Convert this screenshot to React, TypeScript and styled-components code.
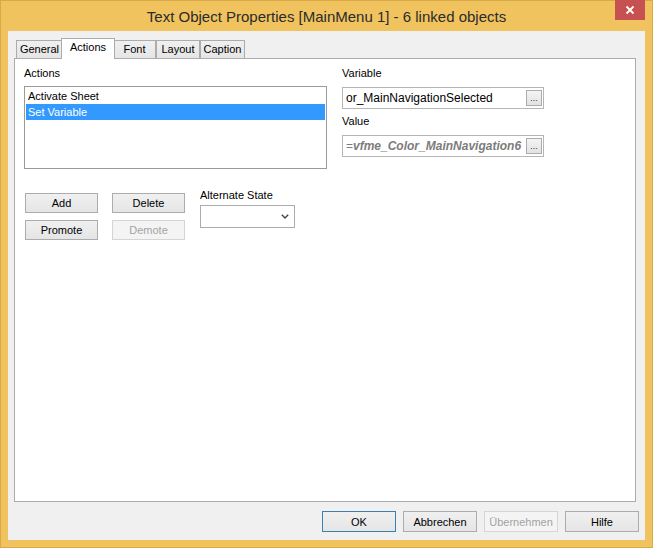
import React from 'react'
import styled, { createGlobalStyle, css } from 'styled-components'

const GlobalStyle = createGlobalStyle`
  html, body {
    margin: 0;
    padding: 0;
  }
  body {
    width: 653px;
    height: 548px;
    overflow: hidden;
    font-family: "Liberation Sans", Arial, sans-serif;
  }
`

const Window = styled.div`
  width: 653px;
  height: 548px;
  box-sizing: border-box;
  border: 1px solid #d9ab48;
  background: #f0c35f;
  display: flex;
  flex-direction: column;
`

const TitleBar = styled.div`
  height: 30px;
  flex-shrink: 0;
  display: grid;
  grid-template-columns: 1fr auto 1fr;
  align-items: center;
  padding: 0 7px;
`

const Title = styled.div`
  grid-column: 2;
  font-size: 15px;
  color: #2b2b2b;
  white-space: nowrap;
`

const CloseButton = styled.div`
  grid-column: 3;
  justify-self: end;
  align-self: start;
  margin-top: -1px;
  width: 30px;
  height: 20px;
  background: #c75050;
  display: flex;
  align-items: center;
  justify-content: center;
`

const Client = styled.div`
  flex: 1;
  margin: 0 7px 7px;
  background: #f0f0f0;
  display: flex;
  flex-direction: column;
  padding: 7px 6px 8px 6px;
`

const TabRow = styled.div`
  height: 21px;
  display: flex;
  align-items: flex-end;
  padding-left: 2px;
  margin: 0 3px -1px 0;
`

const Tab = styled.div<{ $active?: boolean; $w: number }>`
  box-sizing: border-box;
  width: ${(p) => p.$w}px;
  height: 18px;
  margin-bottom: 1px;
  border: 1px solid #acacac;
  border-bottom: none;
  background: linear-gradient(#f0f0f0, #e5e5e5);
  font-size: 11px;
  line-height: 13px;
  padding-top: 2px;
  text-align: center;
  color: #000;
  ${(p) =>
    p.$active &&
    css`
      position: relative;
      z-index: 1;
      height: 21px;
      margin: 0 -2px;
      background: #fff;
    `}
`

const Panel = styled.div`
  flex: 1;
  margin-right: 3px;
  background: #fff;
  border: 1px solid #acacac;
  padding: 8px 9px;
`

const TopGrid = styled.div`
  display: grid;
  grid-template-columns: 303px 202px;
  column-gap: 15px;
`

const Column = styled.div`
  display: flex;
  flex-direction: column;
`

const Label = styled.div`
  font-size: 11px;
  line-height: 13px;
  color: #000;
  margin-bottom: 6px;
`

const ListBox = styled.div`
  box-sizing: border-box;
  height: 83px;
  border: 1px solid #9a9a9a;
  padding: 1px;
`

const ListItem = styled.div<{ $selected?: boolean }>`
  height: 16px;
  line-height: 16px;
  padding-left: 2px;
  font-size: 11px;
  color: ${(p) => (p.$selected ? '#fff' : '#000')};
  background: ${(p) => (p.$selected ? '#3399ff' : 'transparent')};
`

const Field = styled.div`
  box-sizing: border-box;
  height: 22px;
  margin: 1px 0 6px;
  border: 1px solid #b5b5b5;
  background: #fff;
  display: flex;
  align-items: center;
  justify-content: space-between;
  padding: 0 1px 0 3px;
  font-size: 12px;
  color: #000;
  white-space: nowrap;
  overflow: hidden;
`

const ValueText = styled.span`
  color: #7c7c7c;

  & b {
    font-style: italic;
  }
`

const EllipsisButton = styled.div`
  box-sizing: border-box;
  flex-shrink: 0;
  width: 16px;
  height: 16px;
  border: 1px solid #acacac;
  background: linear-gradient(#f4f4f4, #e2e2e2);
  display: flex;
  align-items: flex-end;
  justify-content: center;
  font-size: 9px;
  line-height: 9px;
  padding-bottom: 2px;
  color: #333;
`

const BottomSection = styled.div`
  display: flex;
  margin-top: 20px;
`

const ButtonGrid = styled.div`
  display: grid;
  grid-template-columns: 73px 73px;
  grid-auto-rows: 20px;
  column-gap: 14px;
  row-gap: 7px;
  padding: 4px 0 0 1px;
`

const Button = styled.div<{ $w?: number; $default?: boolean; $disabled?: boolean }>`
  box-sizing: border-box;
  width: ${(p) => (p.$w ? `${p.$w}px` : 'auto')};
  height: 100%;
  border: 1px solid ${(p) => (p.$default ? '#3c7fb1' : '#acacac')};
  background: linear-gradient(#f0f0f0, #e5e5e5);
  display: flex;
  align-items: center;
  justify-content: center;
  font-size: 11px;
  color: #000;
  ${(p) =>
    p.$disabled &&
    css`
      border-color: #d5d5d5;
      background: #f4f4f4;
      color: #a3a3a3;
    `}
`

const StateBlock = styled.div`
  margin-left: 15px;
  display: flex;
  flex-direction: column;
`

const Combo = styled.div`
  box-sizing: border-box;
  width: 95px;
  height: 23px;
  margin-top: -3px;
  border: 1px solid #acacac;
  background: #fff;
  display: flex;
  align-items: center;
  justify-content: flex-end;
  padding-right: 5px;
`

const ButtonBar = styled.div`
  display: flex;
  justify-content: flex-end;
  gap: 7px;
  height: 21px;
  margin-top: 9px;
`

export default function App() {
  return (
    <>
      <GlobalStyle />
      <Window>
        <TitleBar>
          <Title>Text Object Properties [MainMenu 1] - 6 linked objects</Title>
          <CloseButton>
            <svg width="10" height="10" viewBox="0 0 10 10">
              <path d="M1.5 1.5 L8.5 8.5 M8.5 1.5 L1.5 8.5" stroke="#fff" strokeWidth="1.8" />
            </svg>
          </CloseButton>
        </TitleBar>
        <Client>
          <TabRow>
            <Tab $w={47}>General</Tab>
            <Tab $w={54} $active>
              Actions
            </Tab>
            <Tab $w={43}>Font</Tab>
            <Tab $w={44}>Layout</Tab>
            <Tab $w={45}>Caption</Tab>
          </TabRow>
          <Panel>
            <TopGrid>
              <Column>
                <Label>Actions</Label>
                <ListBox>
                  <ListItem>Activate Sheet</ListItem>
                  <ListItem $selected>Set Variable</ListItem>
                </ListBox>
              </Column>
              <Column>
                <Label>Variable</Label>
                <Field>
                  or_MainNavigationSelected
                  <EllipsisButton>...</EllipsisButton>
                </Field>
                <Label>Value</Label>
                <Field>
                  <ValueText>
                    =<b>vfme_Color_MainNavigation6</b>
                  </ValueText>
                  <EllipsisButton>...</EllipsisButton>
                </Field>
              </Column>
            </TopGrid>
            <BottomSection>
              <ButtonGrid>
                <Button>Add</Button>
                <Button>Delete</Button>
                <Button>Promote</Button>
                <Button $disabled>Demote</Button>
              </ButtonGrid>
              <StateBlock>
                <Label>Alternate State</Label>
                <Combo>
                  <svg width="8" height="5" viewBox="0 0 8 5">
                    <path d="M0.8 0.8 L4 4 L7.2 0.8" stroke="#444" strokeWidth="1.4" fill="none" />
                  </svg>
                </Combo>
              </StateBlock>
            </BottomSection>
          </Panel>
          <ButtonBar>
            <Button $w={74} $default>
              OK
            </Button>
            <Button $w={74}>Abbrechen</Button>
            <Button $w={74} $disabled>
              Übernehmen
            </Button>
            <Button $w={74}>Hilfe</Button>
          </ButtonBar>
        </Client>
      </Window>
    </>
  )
}
